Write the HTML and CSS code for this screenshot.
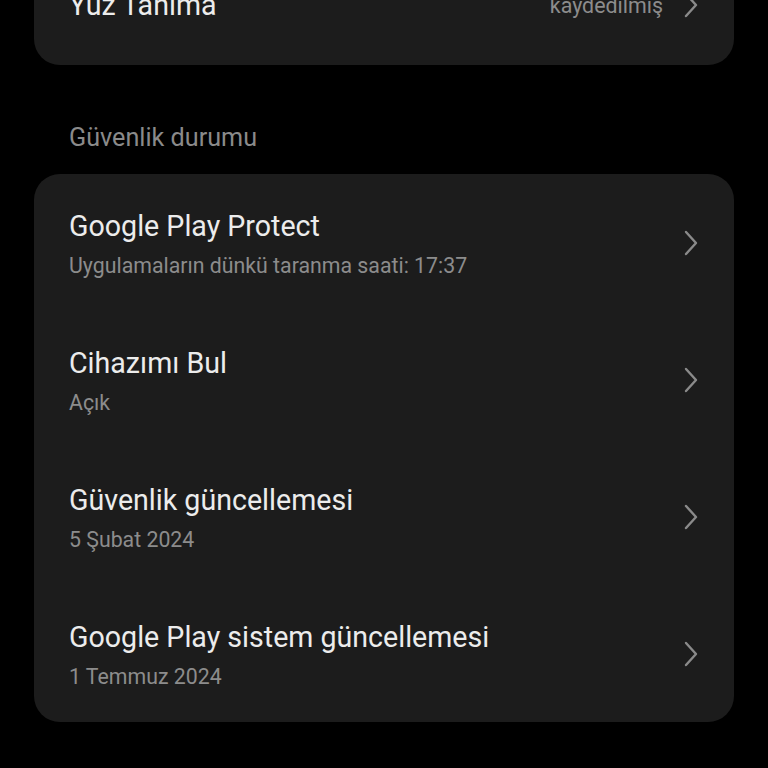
FILE: index.html
```html
<!DOCTYPE html>
<html lang="tr">
<head>
    <meta charset="UTF-8">
    <meta name="viewport" content="width=device-width, initial-scale=1.0">
    <title>Güvenlik</title>
    <link rel="stylesheet" href="styles.css">
</head>
<body>

    <div class="page">

        <!-- Face unlock card (scrolled partly off screen) -->
        <div class="card card-top">
            <div class="row row-single">
                <div class="row-text">
                    <div class="row-title">Yüz Tanıma</div>
                </div>
                <span class="row-value">kaydedilmiş</span>
                <svg class="chevron" viewBox="0 0 14 26"><path d="M2 2 L12 13 L2 24"/></svg>
            </div>
        </div>

        <h2 class="section-label">Güvenlik durumu</h2>

        <div class="card">
            <div class="row">
                <div class="row-text">
                    <div class="row-title">Google Play Protect</div>
                    <div class="row-sub">Uygulamaların dünkü taranma saati: 17:37</div>
                </div>
                <svg class="chevron" viewBox="0 0 14 26"><path d="M2 2 L12 13 L2 24"/></svg>
            </div>
            <div class="row">
                <div class="row-text">
                    <div class="row-title">Cihazımı Bul</div>
                    <div class="row-sub">Açık</div>
                </div>
                <svg class="chevron" viewBox="0 0 14 26"><path d="M2 2 L12 13 L2 24"/></svg>
            </div>
            <div class="row">
                <div class="row-text">
                    <div class="row-title">Güvenlik güncellemesi</div>
                    <div class="row-sub">5 Şubat 2024</div>
                </div>
                <svg class="chevron" viewBox="0 0 14 26"><path d="M2 2 L12 13 L2 24"/></svg>
            </div>
            <div class="row">
                <div class="row-text">
                    <div class="row-title">Google Play sistem güncellemesi</div>
                    <div class="row-sub">1 Temmuz 2024</div>
                </div>
                <svg class="chevron" viewBox="0 0 14 26"><path d="M2 2 L12 13 L2 24"/></svg>
            </div>
        </div>

    </div>

</body>
</html>
```

FILE: styles.css
```css
body {
    margin: 0;
    padding: 0;
    background-color: #000;
    font-family: Roboto, "Noto Sans", sans-serif;
    overflow: hidden;
}

.page {
    padding: 0 34px;
}

.card {
    background-color: #1c1c1c;
    border-radius: 26px;
    padding: 0;
}

.card-top {
    margin-top: -55px;
}

.row {
    display: flex;
    align-items: center;
    height: 137px;
    padding: 0 36px 0 35px;
    box-sizing: border-box;
}

.row-single {
    height: 120px;
}

.row-text {
    flex: 1;
    padding-top: 4px;
}

.row-single .row-text {
    padding-top: 0;
}

.row-title {
    color: #ececec;
    font-size: 28.6px;
    line-height: 34px;
}

.row-sub {
    color: #8c8c8c;
    font-size: 21.3px;
    line-height: 28px;
    margin-top: 9px;
}

.row-value {
    color: #8c8c8c;
    font-size: 21.4px;
    margin-right: 21px;
}

.chevron {
    width: 14px;
    height: 26px;
    fill: none;
    stroke: #8a8a8a;
    stroke-width: 2.4;
    stroke-linecap: round;
    stroke-linejoin: round;
    flex-shrink: 0;
}

.section-label {
    margin: 58px 0 21px 35px;
    color: #8a8a8a;
    font-size: 25.2px;
    font-weight: normal;
    line-height: 30px;
}
```
